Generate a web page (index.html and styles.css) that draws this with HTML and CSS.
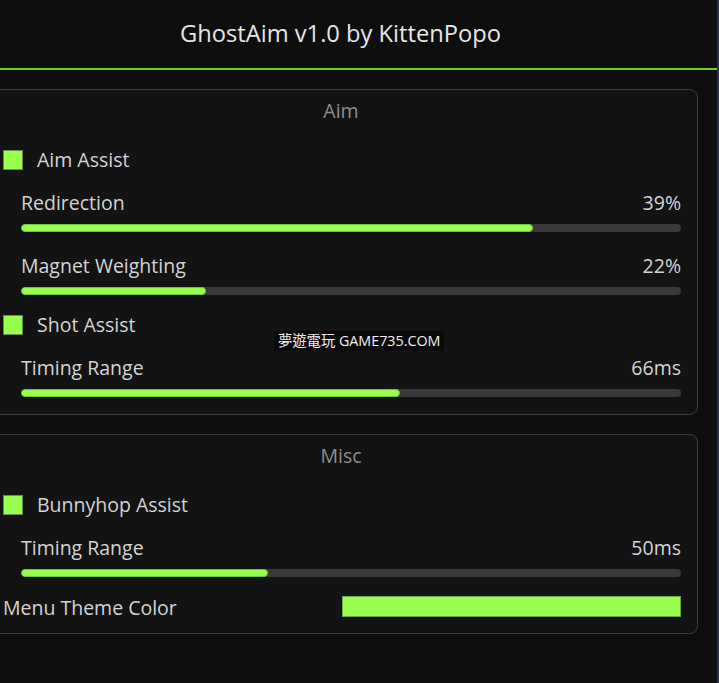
FILE: index.html
```html
<!DOCTYPE html>
<html>
<head>
<meta charset="utf-8">
<link rel="stylesheet" href="styles.css">
</head>
<body>
<div class="window">
  <div class="app">
    <header class="header">GhostAim v1.0 by KittenPopo</header>
    <div class="accent-line"></div>
    <main class="content">
      <section class="panel">
        <div class="panel-title">Aim</div>
        <div class="check-row"><span class="checkbox"></span><span class="label">Aim Assist</span></div>
        <div class="slider">
          <div class="slider-head"><span class="label">Redirection</span><span class="label">39%</span></div>
          <div class="track"><div class="fill" style="width:77.5%"></div></div>
        </div>
        <div class="slider">
          <div class="slider-head"><span class="label">Magnet Weighting</span><span class="label">22%</span></div>
          <div class="track"><div class="fill" style="width:28.1%"></div></div>
        </div>
        <div class="check-row"><span class="checkbox"></span><span class="label">Shot Assist</span></div>
        <div class="slider">
          <div class="slider-head"><span class="label">Timing Range</span><span class="label">66ms</span></div>
          <div class="track"><div class="fill" style="width:57.4%"></div></div>
        </div>
      </section>
      <section class="panel">
        <div class="panel-title">Misc</div>
        <div class="check-row"><span class="checkbox"></span><span class="label">Bunnyhop Assist</span></div>
        <div class="slider">
          <div class="slider-head"><span class="label">Timing Range</span><span class="label">50ms</span></div>
          <div class="track"><div class="fill" style="width:37.4%"></div></div>
        </div>
        <div class="color-row">
          <span class="label">Menu Theme Color</span>
          <span class="swatch"></span>
        </div>
      </section>
    </main>
    <div class="watermark">夢遊電玩 GAME735.COM</div>
  </div>
  <div class="edge"></div>
</div>
</body>
</html>
```
FILE: styles.css
```css
html, body {
  margin: 0;
  padding: 0;
  background: #0e0e0e;
  overflow: hidden;
}
body {
  font-family: "Open Sans", "Noto Sans", sans-serif;
}
.window {
  display: flex;
  width: 719px;
  height: 683px;
}
.app {
  position: relative;
  width: 717px;
  height: 683px;
  background: #0e0e0e;
}
.edge {
  width: 2px;
  background: #26314d;
}
.header {
  height: 68px;
  line-height: 66px;
  box-sizing: border-box;
  padding-right: 36px;
  text-align: center;
  color: #e6e6e6;
  font-size: 23.7px;
}
.accent-line {
  height: 2px;
  background: #6acb2c;
}
.content {
  padding-top: 19px;
  display: flex;
  flex-direction: column;
  gap: 19px;
}
.panel {
  margin-left: -12px;
  width: 710px;
  box-sizing: border-box;
  border: 1px solid #3d3d3d;
  border-radius: 8px;
  background: #131313;
  padding: 0 16px 16px 14px;
  display: flex;
  flex-direction: column;
}
.panel:first-child {
  padding-bottom: 17px;
}
.panel-title {
  height: 42px;
  line-height: 42px;
  text-align: center;
  padding-right: 2px;
  color: #8d8d8d;
  font-size: 19.5px;
}
.label {
  color: #d3d3d3;
  font-size: 19.5px;
  line-height: 24px;
}
.check-row {
  margin-top: 18px;
  height: 20px;
  display: flex;
  align-items: center;
  gap: 14px;
}
.slider + .check-row {
  margin-top: 20px;
}
.checkbox {
  width: 20px;
  height: 20px;
  box-sizing: border-box;
  background: #99ff4d;
  border: 1px solid #6b8a55;
}
.slider {
  margin-top: 21px;
  margin-left: 18px;
}
.slider + .slider {
  margin-top: 22px;
}
.slider-head {
  height: 24px;
  display: flex;
  justify-content: space-between;
  align-items: center;
}
.track {
  margin-top: 9px;
  height: 8px;
  border-radius: 4px;
  background: #393939;
  overflow: hidden;
}
.fill {
  height: 8px;
  box-sizing: border-box;
  border: 1px solid #74c13a;
  border-radius: 4px;
  background: #99ff4d;
}
.color-row {
  margin-top: 19px;
  height: 21px;
  display: flex;
  justify-content: space-between;
  align-items: center;
}
.color-row .label {
  margin-top: 2px;
}
.swatch {
  width: 339px;
  height: 21px;
  box-sizing: border-box;
  background: #99ff4d;
  border: 1px solid #6fa846;
}
.watermark {
  position: absolute;
  left: 274px;
  top: 331px;
  height: 20px;
  line-height: 20px;
  padding: 0 4px;
  background: #0a0a0a;
  color: #f0f0f0;
  font-size: 14.3px;
  font-family: "Open Sans", "Noto Sans CJK TC", sans-serif;
  white-space: nowrap;
}
```
